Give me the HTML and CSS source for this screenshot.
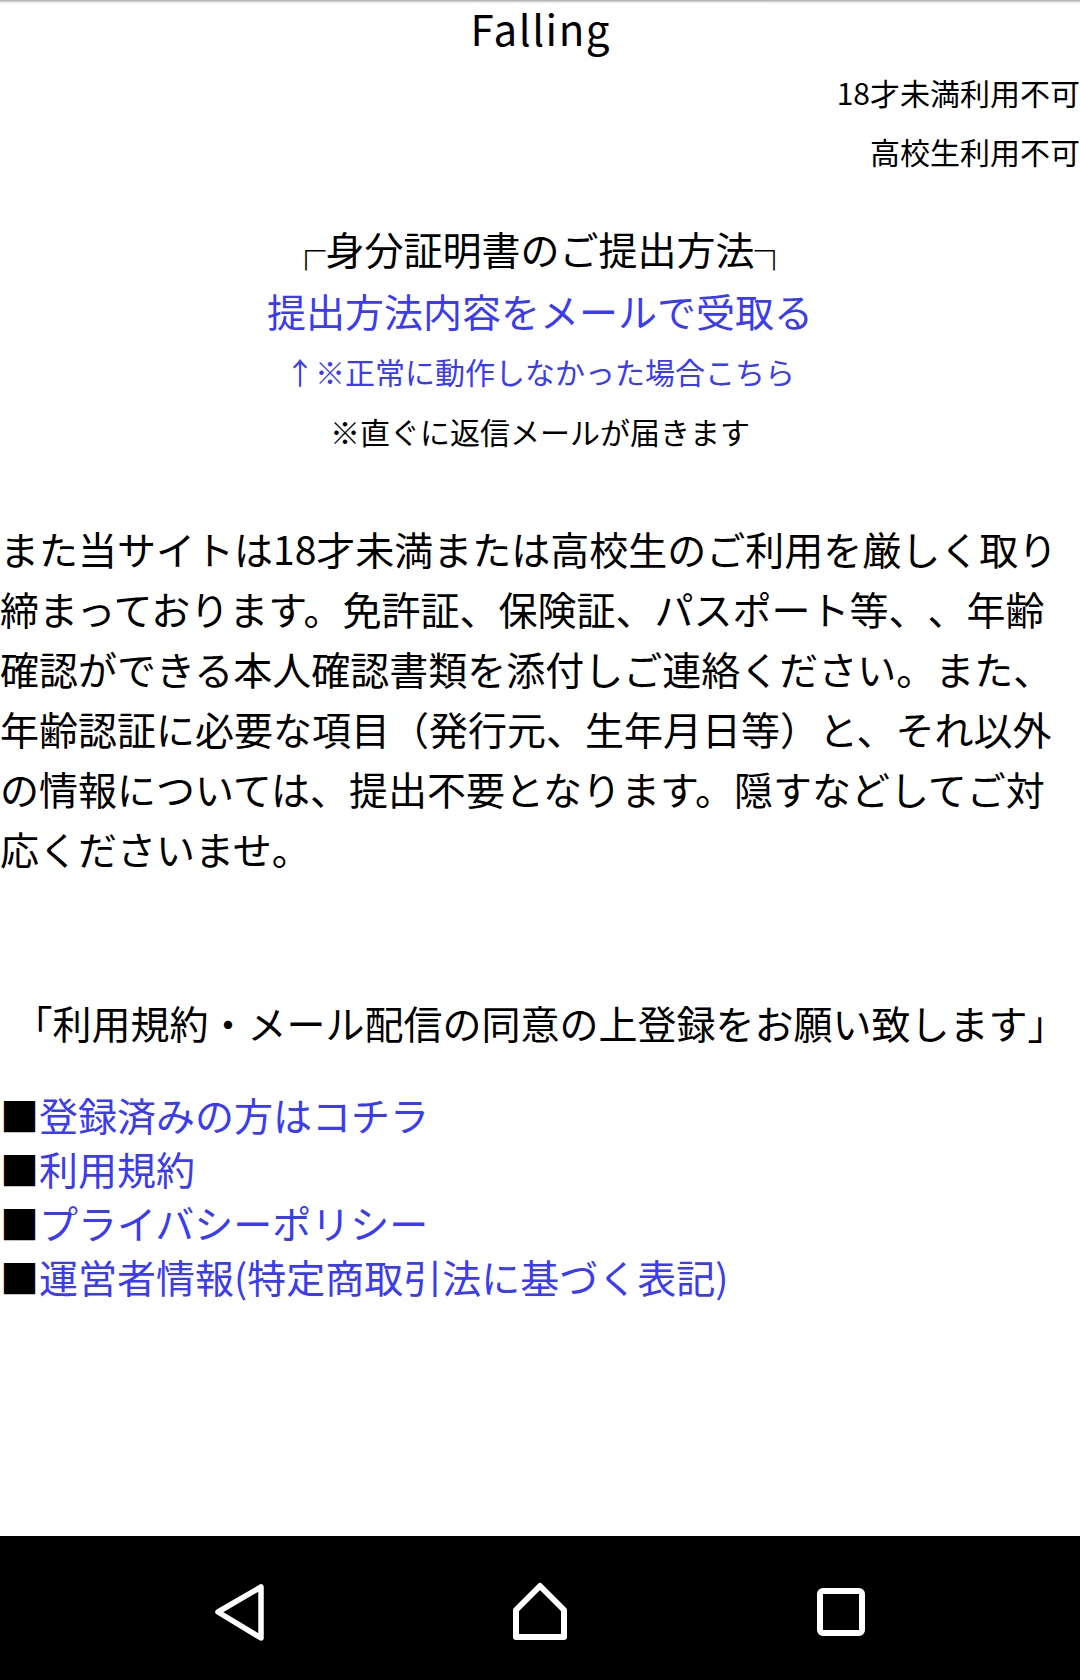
FILE: index.html
```html
<!DOCTYPE html>
<html lang="ja">
<head>
<meta charset="utf-8">
<title>Falling</title>
<link rel="stylesheet" href="styles.css">
</head>
<body>
<div class="page">
  <div class="shade"></div>
  <main class="content">
    <h1 class="title">Falling</h1>
    <div class="age">
      <p class="age-line">18才未満利用不可</p>
      <p class="age-line">高校生利用不可</p>
    </div>
    <div class="id-block">
      <p class="id-heading"><span class="corner corner-left">┌</span>身分証明書のご提出方法<span class="corner corner-right">┐</span></p>
      <p class="id-mail"><a class="link" href="#">提出方法内容をメールで受取る</a></p>
      <p class="id-alt"><a class="link" href="#">↑※正常に動作しなかった場合こちら</a></p>
      <p class="id-note">※直ぐに返信メールが届きます</p>
    </div>
    <p class="notice">また当サイトは18才未満または高校生のご利用を厳しく取り締まっております。免許証、保険証、パスポート等、、年齢確認ができる本人確認書類を添付しご連絡ください。また、年齢認証に必要な項目（発行元、生年月日等）と、それ以外の情報については、提出不要となります。隠すなどしてご対応くださいませ。</p>
    <p class="agree">「利用規約・メール配信の同意の上登録をお願い致します」</p>
    <ul class="links">
      <li class="links-item">■<a class="link" href="#">登録済みの方はコチラ</a></li>
      <li class="links-item">■<a class="link" href="#">利用規約</a></li>
      <li class="links-item">■<a class="link" href="#">プライバシーポリシー</a></li>
      <li class="links-item">■<a class="link" href="#">運営者情報(特定商取引法に基づく表記)</a></li>
    </ul>
  </main>
  <nav class="navbar">
    <svg class="nav-icon" viewBox="0 0 60 60" aria-label="戻る">
      <path d="M8 30 L51 5 L51 56 Z" fill="none" stroke="#fff" stroke-width="5.5" stroke-linejoin="round"/>
    </svg>
    <svg class="nav-icon" viewBox="0 0 60 60" aria-label="ホーム">
      <path d="M30 4 L6 28 L6 55 L54 55 L54 28 Z" fill="none" stroke="#fff" stroke-width="6" stroke-linejoin="round"/>
    </svg>
    <svg class="nav-icon" viewBox="0 0 60 60" aria-label="履歴">
      <rect x="10" y="9" width="42" height="42" rx="3" fill="none" stroke="#fff" stroke-width="6"/>
    </svg>
  </nav>
</div>
</body>
</html>
```
FILE: styles.css
```css
html, body {
  margin: 0;
  padding: 0;
  background: #fff;
}

body {
  font-family: "Noto Sans CJK JP", "Noto Sans", sans-serif;
  color: #000;
  text-spacing-trim: space-all;
}

p, h1, ul {
  margin: 0;
  padding: 0;
}

.page {
  display: flex;
  flex-direction: column;
  min-height: 1680px;
}

.shade {
  height: 4px;
  background: linear-gradient(#a8a8a8, #f4f4f4 70%, #fff);
}

.content {
  flex: 1;
}

.title {
  font-weight: normal;
  font-size: 42px;
  line-height: 47px;
  letter-spacing: 1.5px;
  padding-left: 1.5px;
  text-align: center;
}

.age {
  margin-top: 12px;
  text-align: right;
  font-size: 30px;
}

.age-line {
  line-height: 59px;
}

.id-block {
  margin-top: 36px;
  text-align: center;
}

.id-heading {
  font-size: 39px;
  line-height: 62px;
}

.corner {
  font-weight: bold;
}

.corner-left {
  margin-left: -19px;
}

.corner-right {
  margin-right: -19px;
}

.id-mail {
  font-size: 39px;
  line-height: 62px;
}

.id-alt {
  font-size: 30px;
  line-height: 60px;
}

.id-note {
  font-size: 30px;
  line-height: 60px;
}

.link {
  color: #3b3bf2;
  text-decoration: none;
}

.notice {
  margin-top: 57px;
  font-size: 39px;
  line-height: 60px;
}

.agree {
  margin-top: 114px;
  font-size: 39px;
  line-height: 60px;
  text-align: center;
}

.links {
  margin-top: 35px;
  list-style: none;
  font-size: 39px;
  line-height: 54px;
}

.navbar {
  height: 144px;
  background: #000;
  display: flex;
  justify-content: center;
  align-items: center;
  gap: 240px;
  padding-top: 8px;
  box-sizing: border-box;
}

.nav-icon {
  width: 60px;
  height: 60px;
  display: block;
}
```
